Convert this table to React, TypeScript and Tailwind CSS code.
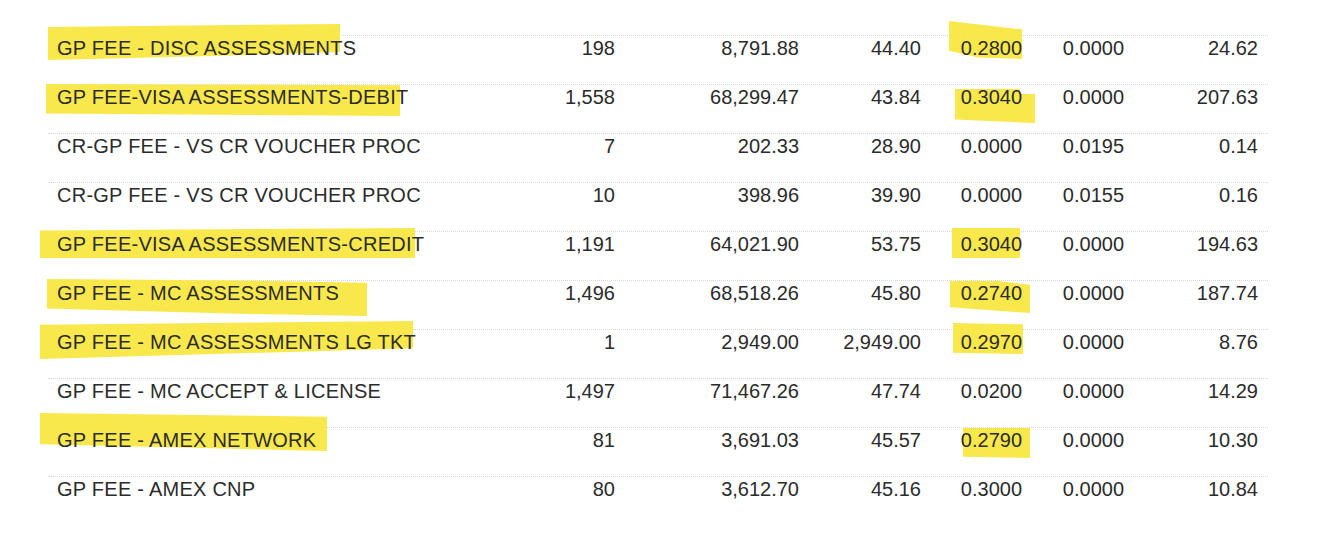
import React from "react";

interface Mark {
  cls: string;
  shape: string;
}

interface Row {
  desc: string;
  count: string;
  amount: string;
  avg: string;
  rate: string;
  item: string;
  total: string;
  marks?: Mark[];
}

const rows: Row[] = [
  {
    desc: "GP FEE - DISC ASSESSMENTS",
    count: "198",
    amount: "8,791.88",
    avg: "44.40",
    rate: "0.2800",
    item: "0.0000",
    total: "24.62",
    marks: [
      { cls: "left-[0px] -top-[12px] w-[292px] h-[36px]", shape: "[clip-path:polygon(0_8%,100%_0,100%_78%,60%_88%,0_100%)]" },
      { cls: "left-[901px] -top-[15px] w-[73px] h-[38px]", shape: "[clip-path:polygon(0_0,35%_8%,100%_22%,100%_100%,40%_96%,0_78%)]" },
    ],
  },
  {
    desc: "GP FEE-VISA ASSESSMENTS-DEBIT",
    count: "1,558",
    amount: "68,299.47",
    avg: "43.84",
    rate: "0.3040",
    item: "0.0000",
    total: "207.63",
    marks: [
      { cls: "-left-[2px] -top-[1px] w-[354px] h-[32px]", shape: "[clip-path:polygon(0_0,100%_4%,100%_100%,0_92%)]" },
      { cls: "left-[907px] top-[4px] w-[80px] h-[34px]", shape: "[clip-path:polygon(0_0,81%_0,81%_15%,100%_15%,100%_100%,0_90%)]" },
    ],
  },
  {
    desc: "CR-GP FEE - VS CR VOUCHER PROC",
    count: "7",
    amount: "202.33",
    avg: "28.90",
    rate: "0.0000",
    item: "0.0195",
    total: "0.14",
  },
  {
    desc: "CR-GP FEE - VS CR VOUCHER PROC",
    count: "10",
    amount: "398.96",
    avg: "39.90",
    rate: "0.0000",
    item: "0.0155",
    total: "0.16",
  },
  {
    desc: "GP FEE-VISA ASSESSMENTS-CREDIT",
    count: "1,191",
    amount: "64,021.90",
    avg: "53.75",
    rate: "0.3040",
    item: "0.0000",
    total: "194.63",
    marks: [
      { cls: "-left-[8px] -top-[4px] w-[375px] h-[30px]", shape: "[clip-path:polygon(0_8%,100%_0,100%_100%,0_100%)]" },
      { cls: "left-[904px] -top-[4px] w-[68px] h-[30px]", shape: "[clip-path:polygon(0_0,100%_0,100%_100%,0_100%)]" },
    ],
  },
  {
    desc: "GP FEE - MC ASSESSMENTS",
    count: "1,496",
    amount: "68,518.26",
    avg: "45.80",
    rate: "0.2740",
    item: "0.0000",
    total: "187.74",
    marks: [
      { cls: "-left-[1px] -top-[2px] w-[320px] h-[37px]", shape: "[clip-path:polygon(0_0,60%_4%,100%_10%,100%_100%,60%_94%,0_80%)]" },
      { cls: "left-[902px] top-[0px] w-[80px] h-[32px]", shape: "[clip-path:polygon(0_0,60%_0,100%_12%,100%_100%,0_82%)]" },
    ],
  },
  {
    desc: "GP FEE - MC ASSESSMENTS LG TKT",
    count: "1",
    amount: "2,949.00",
    avg: "2,949.00",
    rate: "0.2970",
    item: "0.0000",
    total: "8.76",
    marks: [
      { cls: "-left-[8px] -top-[9px] w-[373px] h-[38px]", shape: "[clip-path:polygon(0_10%,100%_0,100%_72%,0_100%)]" },
      { cls: "left-[905px] -top-[7px] w-[70px] h-[31px]", shape: "[clip-path:polygon(0_0,100%_4%,100%_100%,0_96%)]" },
    ],
  },
  {
    desc: "GP FEE - MC ACCEPT & LICENSE",
    count: "1,497",
    amount: "71,467.26",
    avg: "47.74",
    rate: "0.0200",
    item: "0.0000",
    total: "14.29",
  },
  {
    desc: "GP FEE - AMEX NETWORK",
    count: "81",
    amount: "3,691.03",
    avg: "45.57",
    rate: "0.2790",
    item: "0.0000",
    total: "10.30",
    marks: [
      { cls: "-left-[8px] -top-[15px] w-[287px] h-[38px]", shape: "[clip-path:polygon(0_0,100%_10%,100%_100%,0_82%)]" },
      { cls: "left-[915px] top-[0px] w-[67px] h-[30px]", shape: "[clip-path:polygon(0_0,100%_0,100%_100%,0_96%)]" },
    ],
  },
  {
    desc: "GP FEE - AMEX CNP",
    count: "80",
    amount: "3,612.70",
    avg: "45.16",
    rate: "0.3000",
    item: "0.0000",
    total: "10.84",
  },
];

export default function App() {
  return (
    <div
      className="w-[1342px] h-[550px] bg-white overflow-hidden pt-[35px] text-[20px] leading-[24px] text-[#2b2b2b]"
      style={{ fontFamily: '"Liberation Sans", Arial, sans-serif' }}
    >
      {rows.map((r, i) => (
        <div
          key={i}
          className="relative ml-[48px] w-[1220px] h-[49px] flex items-start border-t border-dotted border-[#d6d6d6]"
        >
          {/* highlighter strokes */}
          {r.marks?.map((m, j) => (
            <span
              key={j}
              className={`absolute z-0 bg-[#f9e84c] ${m.cls} ${m.shape}`}
            />
          ))}
          <div className="relative z-10 w-[472px] pl-[9px] whitespace-nowrap tracking-[0.25px]">{r.desc}</div>
          <div className="relative z-10 w-[95px] text-right">{r.count}</div>
          <div className="relative z-10 w-[184px] text-right">{r.amount}</div>
          <div className="relative z-10 w-[122px] text-right">{r.avg}</div>
          <div className="relative z-10 w-[101px] text-right">{r.rate}</div>
          <div className="relative z-10 w-[102px] text-right">{r.item}</div>
          <div className="relative z-10 w-[134px] text-right">{r.total}</div>
        </div>
      ))}
    </div>
  );
}
